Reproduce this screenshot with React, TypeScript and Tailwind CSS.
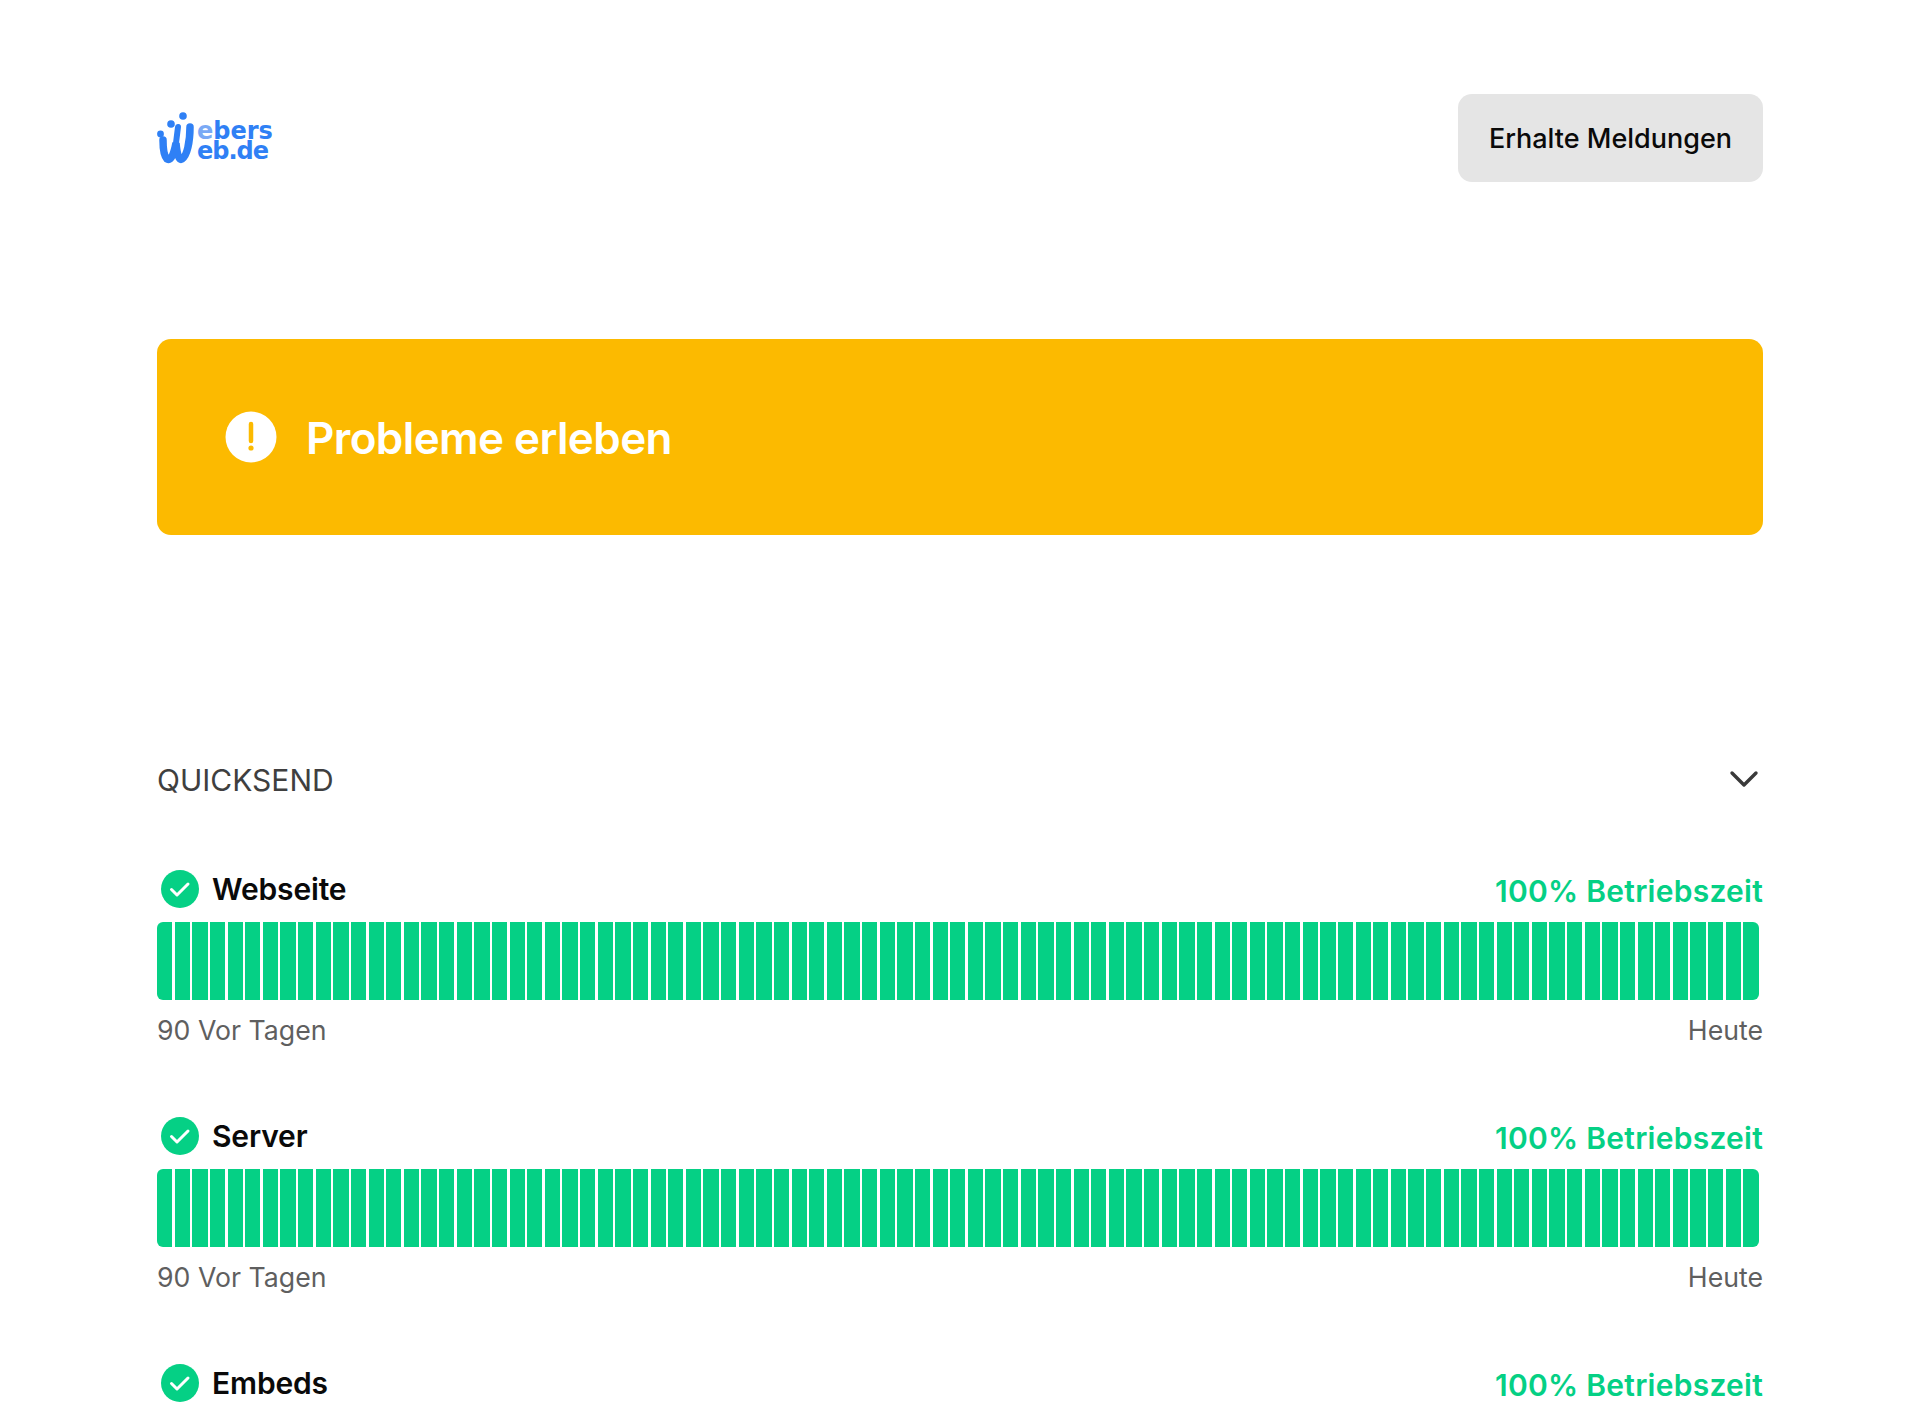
const bars = Array.from({ length: 91 }, (_, i) => i);

function Logo() {
  return (
    <svg width="120" height="56" viewBox="0 0 120 56" className="block" aria-label="WebersWeb.de">
      <circle cx="3.5" cy="24" r="3.4" fill="#2f80f5" />
      <circle cx="14" cy="14" r="3.8" fill="#2f80f5" />
      <circle cx="26" cy="6" r="3.8" fill="#2f80f5" />
      <path d="M6 30 C6 38 7 46 10 49 C14 51 17 44 19 33 C20 44 22 51 25 49 C30 46 33 32 33 17" fill="none" stroke="#2f80f5" strokeWidth="7.5" strokeLinecap="round" />
      <path d="M21 17 L19 33" fill="none" stroke="#2f80f5" strokeWidth="6" strokeLinecap="round" />
      <text x="40" y="29" fill="#2f80f5" fontFamily="'DejaVu Sans', sans-serif" fontWeight="700" fontSize="24">
        <tspan fill="#7aa9f5">e</tspan>bers
      </text>
      <text x="40" y="49" fill="#2f80f5" fontFamily="'DejaVu Sans', sans-serif" fontWeight="700" fontSize="24" letterSpacing="-1">eb.de</text>
    </svg>
  );
}

function Check() {
  return (
    <svg width="38" height="38" viewBox="0 0 38 38" className="block shrink-0">
      <circle cx="19" cy="19" r="19" fill="#05d085" />
      <path d="M10.5 19.5 L16 25 L27 14" fill="none" stroke="#fff" strokeWidth="3" strokeLinecap="round" strokeLinejoin="round" />
    </svg>
  );
}

function Row({ name, headerOnly }: { name: string; headerOnly?: boolean }) {
  return (
    <div className="h-[247px]">
      <div className="flex h-[52px] items-center justify-between">
        <div className="flex items-center gap-[13px] pl-[4px]">
          <Check />
          <span className="text-[30px] font-semibold leading-[38px] tracking-[-0.15px] text-[#0a0a0a]">{name}</span>
        </div>
        <span className="pt-[4px] text-[30px] font-semibold leading-[38px] tracking-[0.25px] text-[#05d085]">100% Betriebszeit</span>
      </div>
      {!headerOnly && (
        <>
          <div className="mr-[4px] mt-[7px] flex h-[78px] gap-[2.3px]">
            {bars.map((i) => (
              <div key={i} className="flex-1 bg-[#05d085] first:rounded-l-[6px] last:rounded-r-[6px]" />
            ))}
          </div>
          <div className="mt-[13px] flex justify-between text-[26.7px] leading-[34px] text-[#5f5f5f]">
            <span>90 Vor Tagen</span>
            <span>Heute</span>
          </div>
        </>
      )}
    </div>
  );
}

export default function App() {
  return (
    <div className="h-[1415px] overflow-hidden bg-white px-[157px] font-['Inter',sans-serif]">
      <header className="flex items-center justify-between pt-[94px]">
        <Logo />
        <button className="flex h-[88px] w-[305px] items-center justify-center rounded-[14px] bg-[#e5e5e5] pt-[3px] text-[27px] font-medium text-[#0a0a0a]">
          Erhalte Meldungen
        </button>
      </header>
      <section className="mt-[157px] flex h-[196px] items-center gap-[29px] rounded-[14px] bg-[#fcba00] pl-[68px]">
        <svg width="52" height="52" viewBox="0 0 52 52" className="block shrink-0">
          <circle cx="26" cy="26" r="25.5" fill="#fff" />
          <path d="M26 13 L26 30" stroke="#fcba00" strokeWidth="4.5" strokeLinecap="round" />
          <circle cx="26" cy="37" r="2.6" fill="#fcba00" />
        </svg>
        <h1 className="pt-[2px] text-[44px] font-semibold leading-[52px] tracking-[-0.6px] text-white">Probleme erleben</h1>
      </section>
      <div className="mt-[215px] flex h-[60px] items-center justify-between">
        <span className="text-[30px] leading-[38px] text-[#3f3f3f]">QUICKSEND</span>
        <svg width="30" height="20" viewBox="0 0 30 20" className="mr-[4px] block">
          <path d="M3 3 L15 15 L27 3" fill="none" stroke="#3a3a3a" strokeWidth="3.4" strokeLinecap="round" strokeLinejoin="round" />
        </svg>
      </div>
      <div className="mt-[53px]">
        <Row name="Webseite" />
        <Row name="Server" />
        <Row name="Embeds" headerOnly />
      </div>
    </div>
  );
}
